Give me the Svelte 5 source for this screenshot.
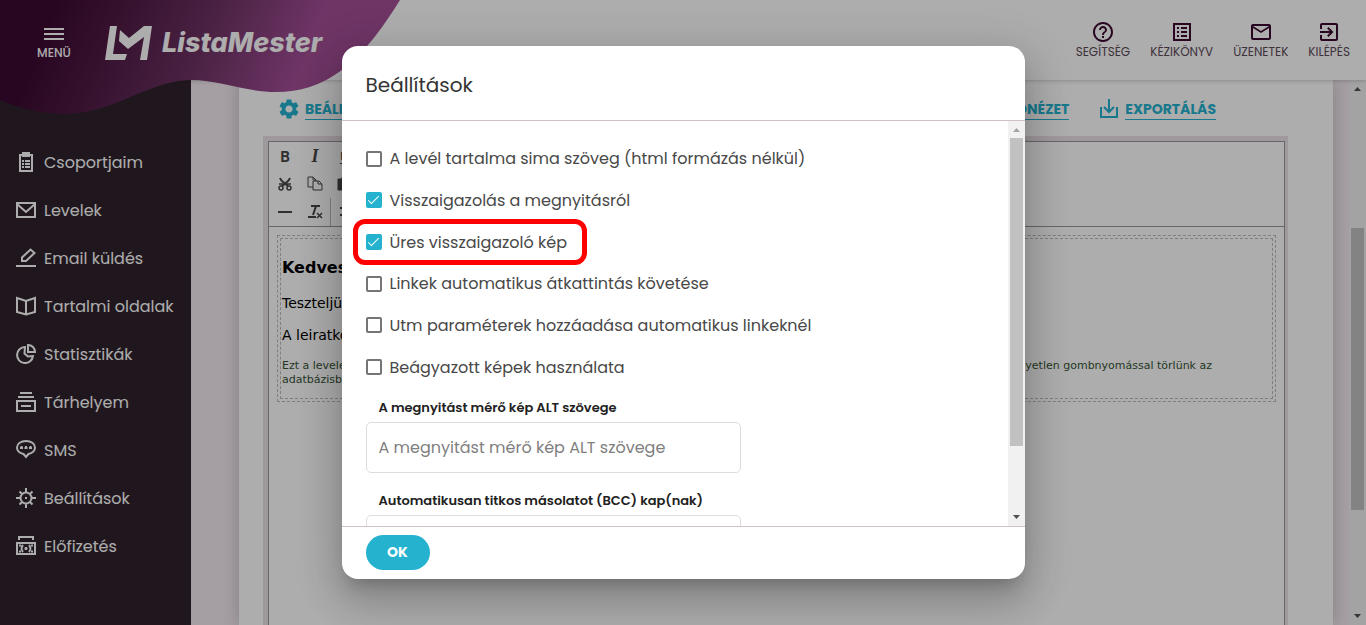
<script lang="ts">
    interface IconLink {
        label: string;
        icon: string;
    }

    interface Option {
        label: string;
        checked: boolean;
        marked?: boolean;
    }

    // 20x20, stroked
    const menu: IconLink[] = [
        { label: "Csoportjaim", icon: "M4 3H16V19H4ZM7 1H13V4H7ZM6 9h2M9 9h5M6 12h2M9 12h5M6 15h2M9 15h5" },
        { label: "Levelek", icon: "M1 3H19V17H1ZM1 4L10 12L19 4" },
        { label: "Email küldés", icon: "M6 13V9.5L14.5 1.5L18.5 5L10 13ZM0 18H20" },
        { label: "Tartalmi oldalak", icon: "M1 2L10 5L19 2V16L10 18.5L1 16ZM10 5V18" },
        { label: "Statisztikák", icon: "M9 3A8 8 0 1 0 17 12L12 12.5L8.5 9.5ZM12 1A7 7 0 0 1 19 8H12Z" },
        { label: "Tárhelyem", icon: "M4 1H16M2 5H18M1 9H19V19H1ZM5 14H15" },
        { label: "SMS", icon: "M7.5 14C3.5 13 1 11 1 7.5C1 3.5 5 1 10 1S19 3.5 19 7.5C19 11 16.5 13 12.5 14L10 17ZM4 8h3M8.5 8h3M13 8h3M4.5 7h2M9 7h2M13.5 7h2" },
        { label: "Beállítások", icon: "M15.5 10A5.5 5.5 0 1 1 4.5 10A5.5 5.5 0 1 1 15.5 10ZM10 0V4M10 16V20M0 10H4M16 10H20M3.5 3.5L6 6M14 14L16.5 16.5M3.5 16.5L6 14M14 6L16.5 3.5M9 10h2" },
        { label: "Előfizetés", icon: "M3 4V1H17V4M1 7H19V18H1ZM8.5 12.5h3M10 11v3M3 9.5h2M15 9.5h2M3 15.5h2M15 15.5h2M7 9Q4 12.5 7 16M13 9Q16 12.5 13 16" },
    ];

    // 24x24, filled
    const tools: IconLink[] = [
        { label: "SEGÍTSÉG", icon: "M11 18h2v-2h-2v2zm1-16C6.48 2 2 6.48 2 12s4.48 10 10 10 10-4.48 10-10S17.52 2 12 2zm0 18c-4.41 0-8-3.59-8-8s3.59-8 8-8 8 3.59 8 8-3.59 8-8 8zm0-14c-2.21 0-4 1.79-4 4h2c0-1.1.9-2 2-2s2 .9 2 2c0 2-3 1.75-3 5h2c0-2.25 3-2.5 3-5 0-2.21-1.79-4-4-4z" },
        { label: "KÉZIKÖNYV", icon: "M19 5v14H5V5h14m2-2H3v18h18V3zM11 7h6v2h-6V7zm0 4h6v2h-6v-2zm0 4h6v2h-6zM7 7h2v2H7zm0 4h2v2H7zm0 4h2v2H7z" },
        { label: "ÜZENETEK", icon: "M22 6c0-1.1-.9-2-2-2H4c-1.1 0-2 .9-2 2v12c0 1.1.9 2 2 2h16c1.1 0 2-.9 2-2V6zm-2 0l-8 5-8-5h16zm0 12H4V8l8 5 8-5v10z" },
        { label: "KILÉPÉS", icon: "M10.09 15.59L11.5 17l5-5-5-5-1.41 1.41L12.67 11H3v2h9.67l-2.58 2.59zM19 3H5c-1.11 0-2 .9-2 2v4h2V5h14v14H5v-4H3v4c0 1.1.89 2 2 2h14c1.1 0 2-.9 2-2V5c0-1.1-.9-2-2-2z" },
    ];

    const gear =
        "M19.14 12.94c.04-.3.06-.61.06-.94 0-.32-.02-.64-.07-.94l2.03-1.58a.49.49 0 00.12-.61l-1.92-3.32a.488.488 0 00-.59-.22l-2.39.96c-.5-.38-1.03-.7-1.62-.94l-.36-2.54a.484.484 0 00-.48-.41h-3.84c-.24 0-.43.17-.47.41l-.36 2.54c-.59.24-1.13.57-1.62.94l-2.39-.96c-.22-.08-.47 0-.59.22L2.74 8.87c-.12.21-.08.47.12.61l2.03 1.58c-.05.3-.09.63-.09.94s.02.64.07.94l-2.03 1.58a.49.49 0 00-.12.61l1.92 3.32c.12.22.37.29.59.22l2.39-.96c.5.38 1.03.7 1.62.94l.36 2.54c.05.24.24.41.48.41h3.84c.24 0 .44-.17.47-.41l.36-2.54c.59-.24 1.13-.56 1.62-.94l2.39.96c.22.08.47 0 .59-.22l1.92-3.32c.12-.22.07-.47-.12-.61l-2.01-1.58zM12 15.6c-1.98 0-3.6-1.62-3.6-3.6s1.62-3.6 3.6-3.6 3.6 1.62 3.6 3.6-1.62 3.6-3.6 3.6z";

    let options = $state<Option[]>([
        { label: "A levél tartalma sima szöveg (html formázás nélkül)", checked: false },
        { label: "Visszaigazolás a megnyitásról", checked: true },
        { label: "Üres visszaigazoló kép", checked: true, marked: true },
        { label: "Linkek automatikus átkattintás követése", checked: false },
        { label: "Utm paraméterek hozzáadása automatikus linkeknél", checked: false },
        { label: "Beágyazott képek használata", checked: false },
    ]);
    let altText = $state("");
    let bcc = $state("");
</script>

{#snippet scrollbar(before: number, thumb: number, after: number, top: boolean)}
    <div class="scrollbar" aria-hidden="true">
        <svg class:faded={top} viewBox="0 0 17 17"><path d="M5 11L8.5 7L12 11Z" /></svg>
        <span style:flex-grow={before}></span>
        <span class="thumb" style:flex-grow={thumb}></span>
        <span style:flex-grow={after}></span>
        <svg viewBox="0 0 17 17"><path d="M5 6L8.5 10L12 6Z" /></svg>
    </div>
{/snippet}

<div class="page">
    <header class="topbar">
        <svg class="wave" viewBox="0 0 400 114" aria-hidden="true">
            <defs>
                <linearGradient id="wave-fill" gradientUnits="userSpaceOnUse" x1="60" y1="0" x2="330" y2="110">
                    <stop offset="0" stop-color="#3c0a31" />
                    <stop offset="0.5" stop-color="#6c3162" />
                    <stop offset="0.85" stop-color="#a24e96" />
                    <stop offset="1" stop-color="#a24e96" />
                </linearGradient>
            </defs>
            <path fill="url(#wave-fill)" d="M0 0H400C385 24 366 52 342 70C320 86 300 92 276 92C245 92 220 80 191 80C150 80 112 114 66 114C42 114 18 108 0 100Z" />
        </svg>
        <button class="menu-button" type="button">
            <svg viewBox="0 0 20 14"><path d="M0 2H20M0 7H20M0 12H20" /></svg>
            MENÜ
        </button>
        <a class="logo" href="#home">
            <svg viewBox="0 0 47 34" aria-hidden="true">
                <path d="M5 0H12L8 28H22L20 34H0ZM15 4L24 12L39 0H47L42 34H35L39 11L23 23L14 15Z" />
            </svg>
            ListaMester
        </a>
        <nav class="tools">
            {#each tools as tool}
                <a href="#tool">
                    <svg viewBox="0 0 24 24" aria-hidden="true"><path d={tool.icon} /></svg>
                    {tool.label}
                </a>
            {/each}
        </nav>
    </header>

    <div class="workspace">
        <nav class="sidebar">
            {#each menu as item}
                <a href="#menu">
                    <svg viewBox="0 0 20 20" aria-hidden="true"><path d={item.icon} /></svg>
                    {item.label}
                </a>
            {/each}
        </nav>

        <main>
            <section class="card">
                <div class="actions">
                    <a href="#settings">
                        <svg viewBox="0 0 24 24" aria-hidden="true"><path d={gear} /></svg>
                        <span>BEÁLLÍTÁSOK</span>
                    </a>
                    <a class="push" href="#preview"><span>ELŐNÉZET</span></a>
                    <a href="#export">
                        <svg class="line" viewBox="0 0 24 24" aria-hidden="true">
                            <path d="M4 10V20H20V10M12 2V15M7 10L12 15L17 10" />
                        </svg>
                        <span>EXPORTÁLÁS</span>
                    </a>
                </div>

                <div class="editor">
                    <div class="toolbar">
                        <div>
                            <button type="button" class="bold">B</button>
                            <button type="button" class="italic">I</button>
                            <button type="button" class="underline">U</button>
                        </div>
                        <div>
                            <button type="button" aria-label="Kivágás">
                                <svg viewBox="0 0 16 16">
                                    <path stroke-width="2" d="M3 2C4 6 8 7 11 10M13 2C12 6 8 7 5 10" />
                                    <path stroke-width="1.5" d="M6 12A2 2 0 1 1 2 12A2 2 0 1 1 6 12ZM14 12A2 2 0 1 1 10 12A2 2 0 1 1 14 12ZM2 8H14" />
                                </svg>
                            </button>
                            <button type="button" aria-label="Másolás">
                                <svg viewBox="0 0 16 16"><path d="M6 11H1V1H6L9 4V5M6 1V4H9M6 5H12L15 8V14H6ZM11 5V8H15" /></svg>
                            </button>
                            <button type="button" aria-label="Beillesztés">
                                <svg viewBox="0 0 16 16"><path fill="currentColor" d="M1 3H13V14H1ZM5 1H10V3H5Z" /></svg>
                            </button>
                        </div>
                        <div>
                            <button type="button" aria-label="Vonal">
                                <svg viewBox="0 0 16 16"><path stroke-width="2" d="M1 8H15" /></svg>
                            </button>
                            <button type="button" aria-label="Formázás törlése">
                                <svg viewBox="0 0 16 16">
                                    <path stroke-width="2" d="M4 2H13M9 2L6 11M1 13H9" />
                                    <path stroke-width="1.5" d="M10 9L15 14M15 9L10 14" />
                                </svg>
                            </button>
                            <span class="divider"></span>
                            <button type="button" aria-label="Lista">
                                <svg viewBox="0 0 16 16"><path stroke-width="2" d="M2 4h2M2 11h2M6 4h9M6 11h9" /></svg>
                            </button>
                        </div>
                    </div>
                    <div class="letter">
                        <div>
                            <h2>Kedves</h2>
                            <p>Teszteljük</p>
                            <p>A leiratkozás</p>
                            <div class="legal">
                                <div><span>Ezt a levelet</span><span>egyetlen gombnyomással törlünk az</span></div>
                                adatbázisból
                            </div>
                        </div>
                    </div>
                </div>
            </section>
        </main>
        {@render scrollbar(131, 282, 98, false)}
    </div>

    <div class="overlay">
        <div class="dialog" role="dialog" aria-labelledby="dialog-title">
            <h1 id="dialog-title">Beállítások</h1>
            <div class="dialog-main">
                <form>
                    <div class="options">
                        {#each options as option}
                            <label class="option" class:marked={option.marked}>
                                <input type="checkbox" bind:checked={option.checked} />
                                {option.label}
                            </label>
                        {/each}
                    </div>
                    <div class="field">
                        <label for="alt-text">A megnyitást mérő kép ALT szövege</label>
                        <input id="alt-text" type="text" placeholder="A megnyitást mérő kép ALT szövege" bind:value={altText} />
                    </div>
                    <div class="field">
                        <label for="bcc">Automatikusan titkos másolatot (BCC) kap(nak)</label>
                        <input id="bcc" type="text" bind:value={bcc} />
                    </div>
                </form>
                {@render scrollbar(0, 308, 63, true)}
            </div>
            <footer><button type="button">OK</button></footer>
        </div>
    </div>
</div>

<style>
    :global(body) {
        margin: 0;
    }

    .page {
        position: relative;
        display: flex;
        flex-direction: column;
        height: 100vh;
        overflow: hidden;
        background: #f3eaf1;
        color: #2f232c;
        font-family: Poppins, Inter, sans-serif;
        font-size: 16px;
    }

    .page *,
    .page *::before,
    .page *::after {
        box-sizing: border-box;
    }

    a {
        color: inherit;
        text-decoration: none;
    }

    button,
    input {
        font: inherit;
    }

    svg {
        display: block;
        flex-shrink: 0;
    }

    .topbar {
        position: relative;
        z-index: 1;
        display: flex;
        align-items: center;
        height: 80px;
        flex-shrink: 0;
        padding: 0 16px 0 24px;
        background: #ffffff;
        box-shadow: 0 1px 4px rgba(0, 0, 0, 0.2);
    }

    .wave {
        position: absolute;
        top: 0;
        left: 0;
        width: 400px;
    }

    .menu-button {
        position: relative;
        display: flex;
        flex-direction: column;
        align-items: center;
        gap: 4px;
        width: 60px;
        padding: 8px 0 0;
        border: 0;
        background: none;
        color: #ffffff;
        font-size: 12px;
        font-weight: 500;
        line-height: 16px;
    }

    .menu-button svg {
        width: 20px;
        stroke: currentColor;
        stroke-width: 2;
    }

    .logo {
        position: relative;
        display: flex;
        align-items: center;
        gap: 10px;
        margin-left: 21px;
        padding-top: 6px;
        color: #ffffff;
        font-family: Inter, sans-serif;
        font-size: 27px;
        font-style: italic;
        font-weight: 800;
        line-height: 36px;
    }

    .logo svg {
        width: 47px;
        fill: currentColor;
    }

    .tools {
        display: flex;
        gap: 20px;
        margin-left: auto;
        color: #5c4b58;
    }

    .tools a {
        display: flex;
        flex-direction: column;
        align-items: center;
        font-size: 12px;
        line-height: 16px;
    }

    .tools svg {
        width: 24px;
        fill: #3c0a31;
    }

    .workspace {
        display: flex;
        flex: 1;
        min-height: 0;
    }

    .sidebar {
        display: flex;
        flex-direction: column;
        width: 191px;
        flex-shrink: 0;
        padding-top: 58px;
        background: #2f232c;
        color: #ffffff;
    }

    .sidebar a {
        display: flex;
        align-items: center;
        gap: 8px;
        height: 48px;
        padding-left: 16px;
    }

    .sidebar svg {
        width: 20px;
        fill: none;
        stroke: currentColor;
        stroke-width: 2;
    }

    main {
        display: flex;
        flex: 1;
        padding: 0 16px 0 48px;
        background: #f3eaf1;
    }

    .card {
        display: flex;
        flex: 1;
        flex-direction: column;
        padding: 0 45px 0 24px;
        background: #ffffff;
        box-shadow: 0 0 16px rgba(0, 0, 0, 0.2);
    }

    .actions {
        display: flex;
        align-items: center;
        gap: 28px;
        height: 56px;
        flex-shrink: 0;
        padding: 2px 72px 0 14px;
        color: #25b2ce;
        font-size: 14px;
        font-weight: 700;
        line-height: 20px;
    }

    .actions a {
        display: flex;
        align-items: center;
        gap: 4px;
    }

    .actions span {
        border-bottom: 1px solid currentColor;
    }

    .actions .push {
        margin-left: auto;
    }

    .actions svg {
        width: 24px;
        fill: currentColor;
    }

    .actions svg.line {
        fill: none;
        stroke: currentColor;
        stroke-width: 2;
    }

    .editor {
        flex: 1;
        border: 5px solid #eae0e8;
        border-right-width: 3px;
        border-bottom: 0;
    }

    .toolbar {
        height: 86px;
        padding-left: 1px;
        border: 1px solid #999999;
        background: #ffffff;
        color: #484848;
    }

    .toolbar div {
        display: flex;
        align-items: center;
        height: 28px;
    }

    .toolbar button {
        display: flex;
        align-items: center;
        justify-content: center;
        width: 30px;
        height: 28px;
        padding: 0;
        border: 0;
        background: none;
        color: inherit;
        font-size: 15px;
    }

    .toolbar .bold {
        font-weight: 600;
    }

    .toolbar .italic {
        font-family: "Liberation Serif", serif;
        font-size: 18px;
        font-style: italic;
        font-weight: 700;
    }

    .toolbar .underline {
        text-decoration: underline;
    }

    .toolbar svg {
        width: 16px;
        fill: none;
        stroke: currentColor;
        stroke-width: 1;
    }

    .divider {
        width: 1px;
        height: 28px;
        background: #bbbbbb;
    }

    .letter {
        height: 100%;
        padding: 8px;
        border: 1px solid #999999;
        border-top: 0;
        color: #000000;
        font-family: Verdana, "DejaVu Sans", sans-serif;
        font-size: 14px;
        line-height: 20px;
    }

    .letter > div {
        padding: 20px 4px 14px;
        border: 1px dashed #bbbbbb;
        outline: 1px dashed #bbbbbb;
        outline-offset: -4px;
    }

    .letter h2 {
        margin: 0 0 13px;
        font-size: 16px;
        line-height: 24px;
    }

    .letter p {
        margin: 0 0 12px;
    }

    .legal {
        padding-top: 2px;
        color: #365334;
        font-size: 11px;
        line-height: 14px;
    }

    .legal div {
        display: flex;
        justify-content: space-between;
        padding-right: 59px;
    }

    .scrollbar {
        display: flex;
        flex-direction: column;
        width: 17px;
        flex-shrink: 0;
        background: #f1f1f1;
    }

    .scrollbar svg {
        width: 17px;
        fill: #505050;
    }

    .scrollbar svg.faded {
        fill: #a3a3a3;
    }

    .thumb {
        margin: 0 2px;
        background: #c1c1c1;
    }

    .overlay {
        position: absolute;
        inset: 0;
        z-index: 2;
        display: flex;
        align-items: center;
        justify-content: center;
        background: rgba(0, 0, 0, 0.32);
    }

    .dialog {
        display: flex;
        flex-direction: column;
        width: 50%;
        height: calc(100% - 92px);
        overflow: hidden;
        border-radius: 16px;
        background: #ffffff;
        box-shadow:
            0 11px 15px -7px rgba(0, 0, 0, 0.2),
            0 24px 38px 3px rgba(0, 0, 0, 0.14),
            0 9px 46px 8px rgba(0, 0, 0, 0.12);
        color: #212121;
    }

    .dialog h1 {
        margin: 0;
        padding: 24px 24px 20px;
        border-bottom: 1px solid #cdc0ca;
        color: #333333;
        font-size: 20px;
        font-weight: 400;
        line-height: 30px;
    }

    .dialog-main {
        display: flex;
        flex: 1;
        min-height: 0;
        overflow: hidden;
    }

    form {
        display: flex;
        flex: 1;
        flex-direction: column;
        align-items: flex-start;
        padding: 17px 24px 0;
        overflow: hidden;
    }

    .options {
        display: grid;
        grid-auto-rows: 1fr;
        justify-items: start;
        height: 250px;
        flex-shrink: 0;
        color: #484848;
    }

    .option {
        position: relative;
        display: flex;
        align-items: center;
        gap: 8px;
    }

    .option input {
        display: flex;
        justify-content: center;
        width: 16px;
        height: 16px;
        margin: 0;
        border: 2px solid #757575;
        border-radius: 2px;
        appearance: none;
    }

    .option input:checked {
        border-color: #25b2ce;
        background: #25b2ce;
    }

    .option input:checked::after {
        content: "";
        width: 11px;
        height: 5px;
        margin-top: 2px;
        flex-shrink: 0;
        border: solid #ffffff;
        border-width: 0 0 1px 1px;
        transform: rotate(-45deg);
    }

    .marked::before {
        content: "";
        position: absolute;
        inset: -2px -20px -2px -13px;
        border: 5px solid #ff0000;
        border-radius: 12px;
        pointer-events: none;
    }

    .field {
        display: flex;
        flex-direction: column;
        width: 375px;
        max-width: 100%;
        flex-shrink: 0;
        margin-bottom: 8px;
    }

    .field label {
        padding: 12px 13px 6px;
        font-size: 13px;
        font-weight: 600;
        line-height: 16px;
    }

    .field input {
        height: 51px;
        padding: 0 12px;
        border: 1px solid #dddddd;
        border-radius: 5px;
        background: #ffffff;
    }

    .field input::placeholder {
        color: #808080;
        opacity: 1;
    }

    footer {
        display: flex;
        align-items: center;
        height: 53px;
        flex-shrink: 0;
        padding: 0 24px 2px;
        border-top: 1px solid #cdc0ca;
    }

    footer button {
        width: 64px;
        height: 35px;
        padding: 0;
        border: 0;
        border-radius: 18px;
        background: #25b2ce;
        color: #ffffff;
        font-size: 14px;
        font-weight: 700;
    }
</style>
